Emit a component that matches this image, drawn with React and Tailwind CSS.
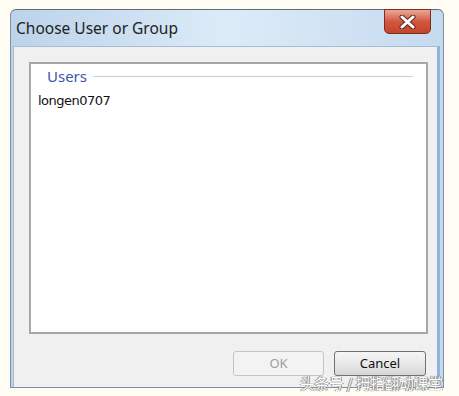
import React from "react";

export default function App() {
  return (
    <div className="relative w-[459px] h-[396px] overflow-hidden bg-[#fffdf3] pt-[9px] pl-[10px]">
      {/* Window */}
      <div className="w-[434px] h-[379px] flex flex-col rounded-t-[6px] border border-[#7f8fa3] border-t-[#5d6b7c] bg-gradient-to-r from-[#bcd3ea] via-[#dcebf8] to-[#c6daee]">
        {/* Title bar */}
        <div className="h-[36px] flex items-start justify-between">
          <span
            className="pl-[5px] pt-[8px] text-[15.5px] text-[#222222] leading-[20px]"
            style={{ fontFamily: '"Noto Sans", "Open Sans", sans-serif' }}
          >
            Choose User or Group
          </span>
          <button className="mr-[12px] -mt-px w-[47px] h-[25px] flex items-center justify-center rounded-b-[5px] border border-[#7a2e22] bg-gradient-to-b from-[#e8a897] via-[#d2563e] to-[#c4442c]">
            <svg width="17" height="14" viewBox="0 0 17 14">
              <path d="M3 2 L14 12 M14 2 L3 12" stroke="#5a2a22" strokeWidth="5" strokeLinecap="round" />
              <path d="M3 2 L14 12 M14 2 L3 12" stroke="#ffffff" strokeWidth="3" strokeLinecap="round" />
            </svg>
          </button>
        </div>

        {/* Content panel */}
        <div className="flex-1 mx-[2px] mr-[3px] border-t border-l border-[#a9bcd2] border-r-[3px] border-r-[#8fb5dc] bg-[#f0f0f0] flex flex-col">
          {/* Group box */}
          <div className="mt-[15px] ml-[15px] w-[399px] h-[272px] border-2 border-[#a7a7a7] bg-white px-[7px] pt-[2px]">
            <div className="flex items-center gap-[6px] pl-[9px]">
              <span
                className="text-[15px] text-[#3a56a6] leading-[20px]"
                style={{ fontFamily: '"Noto Sans", "Open Sans", sans-serif' }}
              >
                Users
              </span>
              <div className="flex-1 mr-[6px] h-px bg-[#c3cfdf]" />
            </div>
            <div
              className="pt-[7px] text-[13px] text-[#111111] leading-[16px]"
              style={{ fontFamily: '"DejaVu Sans", "Noto Sans", sans-serif', letterSpacing: "-0.5px" }}
            >
              longen0707
            </div>
          </div>

          {/* Buttons */}
          <div className="flex justify-end gap-[10px] mt-[17px] mr-[11px]">
            <button
              className="w-[91px] h-[25px] rounded-[3px] border border-[#c4c4c4] bg-[#f3f3f3] text-[13px] text-[#9e9e9e]"
              style={{ fontFamily: '"Noto Sans", "Open Sans", sans-serif' }}
            >
              OK
            </button>
            <button
              className="w-[92px] h-[25px] rounded-[3px] border border-[#707070] bg-gradient-to-b from-[#f6f6f6] via-[#e8e8e8] to-[#d6d6d6] text-[13px] text-[#111111]"
              style={{ fontFamily: '"Noto Sans", "Open Sans", sans-serif' }}
            >
              Cancel
            </button>
          </div>
        </div>
      </div>

      {/* Watermark */}
      <div
        className="absolute left-[300px] top-[373px] text-[14.5px] text-white leading-[20px] whitespace-nowrap"
        style={{
          fontFamily: '"Noto Sans CJK SC", sans-serif',
          textShadow:
            "0 0 1px #7a7a7a, 0 0 1px #7a7a7a, 1px 0 0 #9a9a9a, -1px 0 0 #9a9a9a",
        }}
      >
        头条号 / 拇指翻动课堂
      </div>
    </div>
  );
}
